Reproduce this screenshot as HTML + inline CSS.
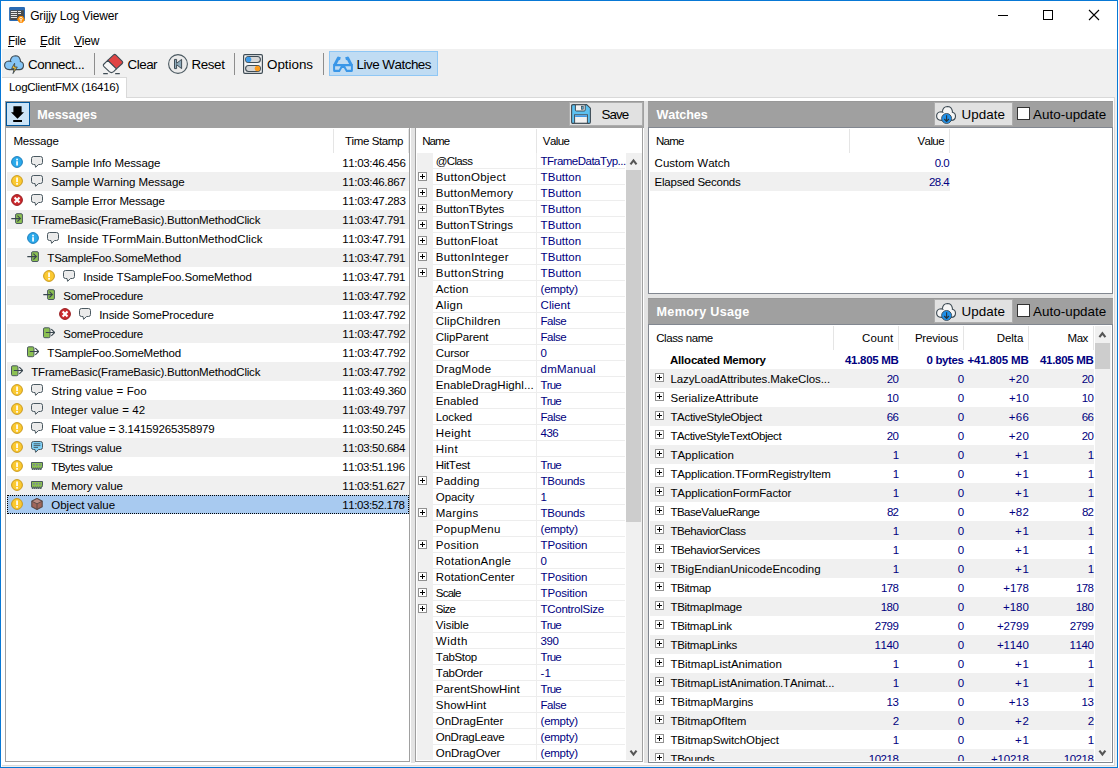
<!DOCTYPE html><html><head><meta charset="utf-8"><title>Grijjy Log Viewer</title>
<style>
*{box-sizing:border-box;margin:0;padding:0}
html,body{width:1119px;height:768px;overflow:hidden;background:#fff}
body{position:relative;font-family:"Liberation Sans",sans-serif;font-size:11.5px;color:#000;line-height:19px}
.a{position:absolute}
.ic{position:absolute;overflow:visible}
.t{position:absolute;white-space:nowrap;font-kerning:none}
.tb{font-size:13px;line-height:28px}
.hd{position:absolute;background:#a0a0a0}
.hdt{position:absolute;color:#fff;font-weight:bold;font-size:12.6px;line-height:26px;white-space:nowrap}
.list{position:absolute;border:1px solid #828790;background:#fff;overflow:hidden}
.row{position:absolute;left:1px;right:0;height:19px}
.g{background:#f0f0f0}
.nv{color:#000080}
.r{text-align:right}
.btn{position:absolute;background:#e1e1e1;border:1px solid #adadad}
.colsep{position:absolute;width:1px;background:#e5e5e5}
.irow{position:absolute;left:1px;height:16px;line-height:16px;width:208px;border-bottom:1px solid #ededed}
.irow .gut{position:absolute;left:0;top:0;width:16px;height:16px;background:#f0f0f0}
.irow .vs{position:absolute;left:119px;top:0;width:1px;height:16px;background:#ededed}
</style></head><body>

<svg width="0" height="0" style="position:absolute">
<defs>
<symbol id="i-info" viewBox="0 0 12 12"><circle cx="6" cy="6" r="5.4" fill="#2aa9ea" stroke="#1a7dbd" stroke-width="1"/><rect x="5.2" y="2.7" width="1.7" height="1.7" fill="#fff"/><rect x="5.2" y="5.2" width="1.7" height="4.3" fill="#fff"/></symbol>
<symbol id="i-warn" viewBox="0 0 12 12"><circle cx="6" cy="6" r="5.4" fill="#fbc931" stroke="#c9981a" stroke-width="1"/><rect x="5.2" y="2.5" width="1.7" height="4.6" fill="#fff"/><rect x="5.2" y="8" width="1.7" height="1.7" fill="#fff"/></symbol>
<symbol id="i-err" viewBox="0 0 12 12"><circle cx="6" cy="6" r="5.4" fill="#cc2a2e" stroke="#96191d" stroke-width="1"/><path d="M3.6 3.6L8.5 8.5M8.5 3.6L3.6 8.5" stroke="#fff" stroke-width="2.1" fill="none"/></symbol>
<symbol id="i-bub" viewBox="0 0 12 12"><path d="M2.5 0.5H9.5Q11.5 0.5 11.5 2.5V6.5Q11.5 8.5 9.5 8.5H7.6L4.6 11.3L4 8.5H2.5Q0.5 8.5 0.5 6.5V2.5Q0.5 0.5 2.5 0.5Z" fill="#ebebeb" stroke="#4a5860" stroke-width="1" stroke-linejoin="round"/></symbol>
<symbol id="i-strs" viewBox="0 0 12 12"><path d="M2.5 0.5H9.5Q11.5 0.5 11.5 2.5V6.5Q11.5 8.5 9.5 8.5H7.6L4.6 11.3L4 8.5H2.5Q0.5 8.5 0.5 6.5V2.5Q0.5 0.5 2.5 0.5Z" fill="#7fd0f6" stroke="#4a5860" stroke-width="1" stroke-linejoin="round"/><path d="M2.6 2.8H9.4M2.6 4.6H9.4M2.6 6.4H7" stroke="#44525a" stroke-width="0.9"/></symbol>
<symbol id="i-mem" viewBox="0 0 12 12"><path d="M0.5 2.5H11.5V6.2L11 8H10.2V9.5H9.2V8H8.2V9.5H7.2V8H6.2V9.5H5.2V8H4.2V9.5H3.2V8H2.2V9.5H1.2V8H0.5Z" fill="#8cc152" stroke="#4a5860" stroke-width="1" stroke-linejoin="round"/><rect x="2" y="4" width="1.8" height="1.6" fill="#7a8a94"/><rect x="5" y="4" width="1.8" height="1.6" fill="#7a8a94"/><rect x="8" y="4" width="1.8" height="1.6" fill="#7a8a94"/></symbol>
<symbol id="i-obj" viewBox="0 0 12 12"><path d="M6 0.6L11.2 3.2V8.8L6 11.4L0.8 8.8V3.2Z" fill="#a1665b" stroke="#5a4a48" stroke-width="1.1" stroke-linejoin="round"/><path d="M6 0.6L11.2 3.2L6 5.8L0.8 3.2Z" fill="#b98a80" stroke="#5a4a48" stroke-width="0.9" stroke-linejoin="round"/><path d="M6 5.8V11.4" stroke="#5a4a48" stroke-width="1"/></symbol>
<symbol id="i-enter" viewBox="0 0 12 12"><rect x="4.6" y="0.7" width="6.8" height="9.8" rx="1.3" fill="#8cc152" stroke="#4a5860" stroke-width="1"/><path d="M0.3 5.6H9M6.4 2.7L9.4 5.6L6.4 8.5" stroke="#3a474f" stroke-width="1.1" fill="none"/></symbol>
<symbol id="i-exit" viewBox="0 0 12 12"><rect x="0.5" y="0.8" width="6.5" height="9.9" rx="1.3" fill="#8cc152" stroke="#4a5860" stroke-width="1"/><path d="M2.8 5.5H11.3M8.3 2.1L11.7 5.5L8.3 8.9" stroke="#3a474f" stroke-width="1.1" fill="none"/></symbol>
<symbol id="i-plus" viewBox="0 0 9 9"><rect x="0.5" y="0.5" width="8" height="8" fill="#fff" stroke="#919191" stroke-width="1"/><path d="M2 4.5H7M4.5 2V7" stroke="#000" stroke-width="1"/></symbol>
<symbol id="i-cloud" viewBox="0 0 20 16"><path d="M5.3 14.6Q0.6 14.4 0.6 10.2Q0.7 6.4 5 6Q6.2 6 7 6.6Q6.3 6 6.3 6Q7 0.8 11.4 0.7Q15.6 0.8 16.4 5.4Q16.5 6 16.3 6.5Q19.5 7 19.5 10.6Q19.3 14.5 15.4 14.6Z" stroke-linejoin="round"/></symbol>
</defs>
</svg>

<div class="a" style="left:0;top:0;width:1118px;height:768px;border:1px solid #0878d5"></div>
<div class="a" style="left:2px;top:49px;width:1115px;height:718px;background:#f0f0f0"></div>
<div class="a" style="left:2px;top:97px;width:1113px;height:669px;background:#fff;border:1px solid #d9d9d9;border-left:none"></div>
<div class="a" style="left:2px;top:77px;width:125px;height:21px;background:#fff;border:1px solid #d9d9d9;border-bottom:none;border-left:none"></div>
<div class="t" style="top:77px;line-height:20px;letter-spacing:-0.285px;left:9.0px;">LogClientFMX (16416)</div>
<svg class="ic" style="left:9px;top:6px" width="17" height="18" viewBox="0 0 17 18">
<rect x="0.1" y="0.9" width="15.9" height="14.1" rx="1.3" fill="#2a6ab3"/>
<rect x="1.2" y="4.2" width="13.7" height="9.7" fill="#4b4b4b"/>
<path d="M1.9 5.5H8M1.9 7.5H8M1.9 9.5H8M1.9 11.5H8M9 5.5H12M9 7.5H12" stroke="#e6e6e6" stroke-width="1.1"/>
<path d="M8.6 13.4L10.3 10.5H13.7L15.4 13.4L13.7 16.3H10.3Z" fill="#ff8c00" stroke="#ff8c00" stroke-width="0.9" stroke-linejoin="round"/>
<circle cx="12" cy="12.6" r="1.25" stroke="#fff" stroke-width="0.8" fill="none"/><path d="M12 13.8V16" stroke="#fff" stroke-width="0.9"/></svg>
<div class="t" style="top:6px;line-height:20px;letter-spacing:-0.159px;font-size:12px;left:30.2px;">Grijjy Log Viewer</div>
<div class="a" style="left:998px;top:15px;width:10px;height:1px;background:#000"></div>
<div class="a" style="left:1043px;top:10px;width:10px;height:10px;border:1px solid #000"></div>
<svg class="ic" style="left:1088px;top:9px" width="12" height="12" viewBox="0 0 12 12"><path d="M1 1L11 11M11 1L1 11" stroke="#000" stroke-width="1.1"/></svg>
<div class="t" style="top:32px;line-height:19px;letter-spacing:-0.349px;font-size:12px;left:8px;">File</div>
<div class="a" style="left:8px;top:46px;width:5.9px;height:1px;background:#000"></div>
<div class="t" style="top:32px;line-height:19px;letter-spacing:-0.142px;font-size:12px;left:40px;">Edit</div>
<div class="a" style="left:40px;top:46px;width:6.1px;height:1px;background:#000"></div>
<div class="t" style="top:32px;line-height:19px;letter-spacing:-0.182px;font-size:12px;left:74px;">View</div>
<div class="a" style="left:74px;top:46px;width:7.5px;height:1px;background:#000"></div>
<svg class="ic" style="left:4px;top:54px" width="20" height="21" viewBox="0 0 20 21">
<use href="#i-cloud" y="1" width="20" height="16" fill="#86c5f6" stroke="#3f4c55" stroke-width="1.1"/>
<path d="M10.6 9.2L7.6 14.6H10.2L9 19.6L13.3 13H10.7Z" fill="#fbc531" stroke="#3f4c55" stroke-width="0.9" stroke-linejoin="round"/></svg>
<div class="t" style="top:51px;line-height:28px;letter-spacing:-0.478px;font-size:13.4px;left:28px;">Connect...</div>
<div class="a" style="left:94px;top:53px;width:1px;height:22px;background:#8d8d8d"></div>
<svg class="ic" style="left:102px;top:53px" width="22" height="22" viewBox="0 0 22 22">
<path d="M11.6 1.9Q12.7 0.9 13.8 1.9L20.3 8.3Q21.3 9.4 20.3 10.5L14.4 15.9L5.7 7.4Z" fill="#e04444" stroke="#3f4c55" stroke-width="1.1" stroke-linejoin="round"/>
<path d="M5.7 7.4L14.4 15.9L11.6 18.7Q9.4 20.6 7.3 18.7L2 13.6Q0.6 12.4 2 11Z" fill="#f6f6f6" stroke="#3f4c55" stroke-width="1.1" stroke-linejoin="round"/>
<path d="M1.2 20.6H5.8M13.2 20.6H17.8" stroke="#3f4c55" stroke-width="1.1"/></svg>
<div class="t" style="top:51px;line-height:28px;letter-spacing:-0.484px;font-size:13.4px;left:127.5px;">Clear</div>
<svg class="ic" style="left:168px;top:54px" width="20" height="20" viewBox="0 0 20 20">
<circle cx="10" cy="10" r="9.4" fill="#ebebeb" stroke="#4a5860" stroke-width="1.1"/>
<path d="M6.5 5.4H8.6V9.3L13.6 5.4V14.6L8.6 10.7V14.6H6.5Z" fill="#8eaaba" stroke="#3f4c55" stroke-width="1" stroke-linejoin="round"/></svg>
<div class="t" style="top:51px;line-height:28px;letter-spacing:-0.401px;font-size:13.4px;left:191.5px;">Reset</div>
<div class="a" style="left:234px;top:53px;width:1px;height:22px;background:#8d8d8d"></div>
<svg class="ic" style="left:243px;top:54px" width="20" height="20" viewBox="0 0 20 20">
<rect x="0.6" y="0.6" width="18.8" height="18.8" rx="1.3" fill="#f4f4f4" stroke="#3f4c55" stroke-width="1.2"/>
<rect x="2.6" y="2.5" width="14.8" height="6" rx="3" fill="#d6d6d6" stroke="#3f4c55" stroke-width="1.1"/>
<rect x="2.6" y="11.5" width="14.8" height="6" rx="3" fill="#d6d6d6" stroke="#3f4c55" stroke-width="1.1"/>
<circle cx="5.6" cy="5.5" r="2.7" fill="#3d9be9"/><circle cx="14.4" cy="14.5" r="2.7" fill="#fb9a1b"/></svg>
<div class="t" style="top:51px;line-height:28px;letter-spacing:-0.026px;font-size:13.4px;left:267px;">Options</div>
<div class="a" style="left:323px;top:53px;width:1px;height:22px;background:#8d8d8d"></div>
<div class="a" style="left:329px;top:51px;width:109px;height:25px;background:#c0dcf3;border:1px solid #8fc7f5"></div>
<svg class="ic" style="left:333px;top:56px" width="20" height="17" viewBox="0 0 20 17">
<path fill-rule="evenodd" fill="#3a97e8" d="M0.1 7.9H19.9V14.5Q19.9 16 18.4 16H13.2L10.9 12H9.1L6.8 16H1.6Q0.1 16 0.1 14.5ZM2.1 10.2V13.8H5.9L7.8 10.2ZM12.2 10.2L14.1 13.8H17.9V10.2Z"/>
<path d="M1.9 8.6L5.3 2.1L7.4 2.7M18.1 8.6L14.7 2.1L12.6 2.7" stroke="#3a97e8" stroke-width="3" fill="none" stroke-linejoin="round"/></svg>
<div class="t" style="top:51px;line-height:28px;letter-spacing:-0.486px;font-size:13.4px;left:356.5px;">Live Watches</div>
<div class="a" style="left:410px;top:126px;width:5px;height:637px;background:#e3e3e3;border-left:1px solid #fff"></div>
<div class="a" style="left:644px;top:101px;width:4px;height:662px;background:#e3e3e3"></div>
<div class="a" style="left:648px;top:294px;width:465px;height:4px;background:#e3e3e3"></div>
<div class="hd" style="left:5px;top:101px;width:639px;height:27px;border-top:1px solid #989898"></div>
<div class="a" style="left:6px;top:102px;width:24px;height:24px;background:#cce4f7;border:1px solid #005499"></div>
<svg class="ic" style="left:6px;top:102px" width="24" height="24" viewBox="0 0 24 24"><path d="M7.4 4.2H15.6V10.3H18L11.5 16.8L5 10.3H7.4Z" fill="#000"/><rect x="7.2" y="18" width="8.8" height="2" fill="#000"/></svg>
<div class="t" style="top:102px;line-height:26px;letter-spacing:-0.080px;font-size:12.6px;font-weight:bold;left:37.3px;color:#fff">Messages</div>
<div class="btn" style="left:569px;top:102px;width:74px;height:24px"></div>
<svg class="ic" style="left:571px;top:104px" width="20" height="20" viewBox="0 0 20 20">
<path d="M2 0.6H15.6L19.4 4.2V18Q19.4 19.4 18 19.4H2Q0.6 19.4 0.6 18V2Q0.6 0.6 2 0.6Z" fill="#5cc1f1" stroke="#3f4c55" stroke-width="1.1"/>
<path d="M4.4 0.8H14.2V6Q14.2 7 13.2 7H5.4Q4.4 7 4.4 6Z" fill="#f1f1f1" stroke="#3f4c55" stroke-width="1"/>
<rect x="10.4" y="2.3" width="1.8" height="2.9" fill="#5cc1f1" stroke="#3f4c55" stroke-width="0.8"/>
<rect x="3.6" y="10.8" width="12.8" height="8.4" fill="#f1f1f1" stroke="#3f4c55" stroke-width="1"/>
<rect x="4.1" y="11.3" width="11.8" height="1.7" fill="#3d9be9"/></svg>
<div class="t" style="top:102px;line-height:26px;letter-spacing:-0.936px;font-size:13.4px;left:601.5px;">Save</div>
<div class="list" style="left:5px;top:127px;width:405px;height:635px;border-color:#a0a0a0">
<div class="t" style="top:1px;line-height:25px;letter-spacing:-0.209px;left:7.4px;">Message</div>
<div class="colsep" style="left:327px;top:1px;height:24px"></div>
<div class="t" style="top:1px;line-height:25px;letter-spacing:-0.379px;left:338.9px;">Time Stamp</div>
<div class="colsep" style="left:402px;top:1px;height:24px"></div>
<div class="row" style="top:25px">
<svg class="ic" style="left:4px;top:3px" width="12" height="12" ><use href="#i-info"/></svg>
<svg class="ic" style="left:24px;top:3px" width="12" height="12" ><use href="#i-bub"/></svg>
<div class="t" style="top:1px;line-height:19px;letter-spacing:-0.116px;left:44.3px;">Sample Info Message</div>
<div class="t" style="top:1px;line-height:19px;letter-spacing:-0.319px;left:335.2px;">11:03:46.456</div>
</div>
<div class="row g" style="top:44px">
<svg class="ic" style="left:4px;top:3px" width="12" height="12" ><use href="#i-warn"/></svg>
<svg class="ic" style="left:24px;top:3px" width="12" height="12" ><use href="#i-bub"/></svg>
<div class="t" style="top:1px;line-height:19px;letter-spacing:-0.073px;left:44.3px;">Sample Warning Message</div>
<div class="t" style="top:1px;line-height:19px;letter-spacing:-0.325px;left:335.2px;">11:03:46.867</div>
</div>
<div class="row" style="top:63px">
<svg class="ic" style="left:4px;top:3px" width="12" height="12" ><use href="#i-err"/></svg>
<svg class="ic" style="left:24px;top:3px" width="12" height="12" ><use href="#i-bub"/></svg>
<div class="t" style="top:1px;line-height:19px;letter-spacing:-0.214px;left:44.3px;">Sample Error Message</div>
<div class="t" style="top:1px;line-height:19px;letter-spacing:-0.321px;left:335.2px;">11:03:47.283</div>
</div>
<div class="row g" style="top:82px">
<svg class="ic" style="left:4px;top:3px" width="12" height="12" ><use href="#i-enter"/></svg>
<div class="t" style="top:1px;line-height:19px;letter-spacing:-0.200px;left:24.3px;">TFrameBasic(FrameBasic).ButtonMethodClick</div>
<div class="t" style="top:1px;line-height:19px;letter-spacing:-0.357px;left:335.2px;">11:03:47.791</div>
</div>
<div class="row" style="top:101px">
<svg class="ic" style="left:20px;top:3px" width="12" height="12" ><use href="#i-info"/></svg>
<svg class="ic" style="left:40px;top:3px" width="12" height="12" ><use href="#i-bub"/></svg>
<div class="t" style="top:1px;line-height:19px;letter-spacing:0.087px;left:60.3px;">Inside TFormMain.ButtonMethodClick</div>
<div class="t" style="top:1px;line-height:19px;letter-spacing:-0.357px;left:335.2px;">11:03:47.791</div>
</div>
<div class="row g" style="top:120px">
<svg class="ic" style="left:20px;top:3px" width="12" height="12" ><use href="#i-enter"/></svg>
<div class="t" style="top:1px;line-height:19px;letter-spacing:-0.184px;left:40.3px;">TSampleFoo.SomeMethod</div>
<div class="t" style="top:1px;line-height:19px;letter-spacing:-0.357px;left:335.2px;">11:03:47.791</div>
</div>
<div class="row" style="top:139px">
<svg class="ic" style="left:36px;top:3px" width="12" height="12" ><use href="#i-warn"/></svg>
<svg class="ic" style="left:56px;top:3px" width="12" height="12" ><use href="#i-bub"/></svg>
<div class="t" style="top:1px;line-height:19px;letter-spacing:-0.101px;left:76.3px;">Inside TSampleFoo.SomeMethod</div>
<div class="t" style="top:1px;line-height:19px;letter-spacing:-0.357px;left:335.2px;">11:03:47.791</div>
</div>
<div class="row g" style="top:158px">
<svg class="ic" style="left:36px;top:3px" width="12" height="12" ><use href="#i-enter"/></svg>
<div class="t" style="top:1px;line-height:19px;letter-spacing:-0.264px;left:56.3px;">SomeProcedure</div>
<div class="t" style="top:1px;line-height:19px;letter-spacing:-0.338px;left:335.2px;">11:03:47.792</div>
</div>
<div class="row" style="top:177px">
<svg class="ic" style="left:52px;top:3px" width="12" height="12" ><use href="#i-err"/></svg>
<svg class="ic" style="left:72px;top:3px" width="12" height="12" ><use href="#i-bub"/></svg>
<div class="t" style="top:1px;line-height:19px;letter-spacing:-0.131px;left:92.3px;">Inside SomeProcedure</div>
<div class="t" style="top:1px;line-height:19px;letter-spacing:-0.338px;left:335.2px;">11:03:47.792</div>
</div>
<div class="row g" style="top:196px">
<svg class="ic" style="left:36px;top:3px" width="12" height="12" ><use href="#i-exit"/></svg>
<div class="t" style="top:1px;line-height:19px;letter-spacing:-0.264px;left:56.3px;">SomeProcedure</div>
<div class="t" style="top:1px;line-height:19px;letter-spacing:-0.338px;left:335.2px;">11:03:47.792</div>
</div>
<div class="row" style="top:215px">
<svg class="ic" style="left:20px;top:3px" width="12" height="12" ><use href="#i-exit"/></svg>
<div class="t" style="top:1px;line-height:19px;letter-spacing:-0.184px;left:40.3px;">TSampleFoo.SomeMethod</div>
<div class="t" style="top:1px;line-height:19px;letter-spacing:-0.338px;left:335.2px;">11:03:47.792</div>
</div>
<div class="row g" style="top:234px">
<svg class="ic" style="left:4px;top:3px" width="12" height="12" ><use href="#i-exit"/></svg>
<div class="t" style="top:1px;line-height:19px;letter-spacing:-0.200px;left:24.3px;">TFrameBasic(FrameBasic).ButtonMethodClick</div>
<div class="t" style="top:1px;line-height:19px;letter-spacing:-0.338px;left:335.2px;">11:03:47.792</div>
</div>
<div class="row" style="top:253px">
<svg class="ic" style="left:4px;top:3px" width="12" height="12" ><use href="#i-warn"/></svg>
<svg class="ic" style="left:24px;top:3px" width="12" height="12" ><use href="#i-bub"/></svg>
<div class="t" style="top:1px;line-height:19px;letter-spacing:0.107px;left:44.3px;">String value = Foo</div>
<div class="t" style="top:1px;line-height:19px;letter-spacing:-0.280px;left:335.2px;">11:03:49.360</div>
</div>
<div class="row g" style="top:272px">
<svg class="ic" style="left:4px;top:3px" width="12" height="12" ><use href="#i-warn"/></svg>
<svg class="ic" style="left:24px;top:3px" width="12" height="12" ><use href="#i-bub"/></svg>
<div class="t" style="top:1px;line-height:19px;letter-spacing:0.082px;left:44.3px;">Integer value = 42</div>
<div class="t" style="top:1px;line-height:19px;letter-spacing:-0.337px;left:335.2px;">11:03:49.797</div>
</div>
<div class="row" style="top:291px">
<svg class="ic" style="left:4px;top:3px" width="12" height="12" ><use href="#i-warn"/></svg>
<svg class="ic" style="left:24px;top:3px" width="12" height="12" ><use href="#i-bub"/></svg>
<div class="t" style="top:1px;line-height:19px;letter-spacing:-0.175px;left:44.3px;">Float value = 3.14159265358979</div>
<div class="t" style="top:1px;line-height:19px;letter-spacing:-0.355px;left:335.2px;">11:03:50.245</div>
</div>
<div class="row g" style="top:310px">
<svg class="ic" style="left:4px;top:3px" width="12" height="12" ><use href="#i-warn"/></svg>
<svg class="ic" style="left:24px;top:3px" width="12" height="12" ><use href="#i-strs"/></svg>
<div class="t" style="top:1px;line-height:19px;letter-spacing:-0.233px;left:44.3px;">TStrings value</div>
<div class="t" style="top:1px;line-height:19px;letter-spacing:-0.348px;left:335.2px;">11:03:50.684</div>
</div>
<div class="row" style="top:329px">
<svg class="ic" style="left:4px;top:3px" width="12" height="12" ><use href="#i-warn"/></svg>
<svg class="ic" style="left:24px;top:3px" width="12" height="12" ><use href="#i-mem"/></svg>
<div class="t" style="top:1px;line-height:19px;letter-spacing:-0.435px;left:44.3px;">TBytes value</div>
<div class="t" style="top:1px;line-height:19px;letter-spacing:-0.392px;left:335.2px;">11:03:51.196</div>
</div>
<div class="row g" style="top:348px">
<svg class="ic" style="left:4px;top:3px" width="12" height="12" ><use href="#i-warn"/></svg>
<svg class="ic" style="left:24px;top:3px" width="12" height="12" ><use href="#i-mem"/></svg>
<div class="t" style="top:1px;line-height:19px;letter-spacing:-0.057px;left:44.3px;">Memory value</div>
<div class="t" style="top:1px;line-height:19px;letter-spacing:-0.379px;left:335.2px;">11:03:51.627</div>
</div>
<div class="row" style="top:367px;background:#a8caf0;outline:1px dotted #000;outline-offset:-1px">
<svg class="ic" style="left:4px;top:3px" width="12" height="12" ><use href="#i-warn"/></svg>
<svg class="ic" style="left:24px;top:3px" width="12" height="12" ><use href="#i-obj"/></svg>
<div class="t" style="top:1px;line-height:19px;letter-spacing:-0.015px;left:44.3px;">Object value</div>
<div class="t" style="top:1px;line-height:19px;letter-spacing:-0.403px;left:335.2px;">11:03:52.178</div>
</div>
</div>
<div class="list" style="left:415px;top:127px;width:228px;height:635px;border-color:#a0a0a0">
<div class="t" style="top:1px;line-height:25px;letter-spacing:-0.919px;left:6.2px;">Name</div>
<div class="colsep" style="left:120px;top:1px;height:24px"></div>
<div class="t" style="top:1px;line-height:25px;letter-spacing:-0.583px;left:126.8px;">Value</div>
<div class="irow" style="top:25px"><div class="gut"></div><div class="vs"></div>
<div class="t" style="top:0px;line-height:16px;letter-spacing:-0.662px;left:18.8px;">@Class</div>
<div class="t nv" style="top:0px;line-height:16px;letter-spacing:-0.519px;left:123.6px;">TFrameDataTyp...</div>
</div>
<div class="irow" style="top:41px"><div class="gut"></div><div class="vs"></div>
<svg class="ic" style="left:1px;top:3px" width="9" height="9" ><use href="#i-plus"/></svg>
<div class="t" style="top:0px;line-height:16px;letter-spacing:0.310px;left:18.8px;">ButtonObject</div>
<div class="t nv" style="top:0px;line-height:16px;letter-spacing:0.060px;left:123.6px;">TButton</div>
</div>
<div class="irow" style="top:57px"><div class="gut"></div><div class="vs"></div>
<svg class="ic" style="left:1px;top:3px" width="9" height="9" ><use href="#i-plus"/></svg>
<div class="t" style="top:0px;line-height:16px;letter-spacing:0.226px;left:18.8px;">ButtonMemory</div>
<div class="t nv" style="top:0px;line-height:16px;letter-spacing:0.060px;left:123.6px;">TButton</div>
</div>
<div class="irow" style="top:73px"><div class="gut"></div><div class="vs"></div>
<svg class="ic" style="left:1px;top:3px" width="9" height="9" ><use href="#i-plus"/></svg>
<div class="t" style="top:0px;line-height:16px;letter-spacing:-0.054px;left:18.8px;">ButtonTBytes</div>
<div class="t nv" style="top:0px;line-height:16px;letter-spacing:0.060px;left:123.6px;">TButton</div>
</div>
<div class="irow" style="top:89px"><div class="gut"></div><div class="vs"></div>
<svg class="ic" style="left:1px;top:3px" width="9" height="9" ><use href="#i-plus"/></svg>
<div class="t" style="top:0px;line-height:16px;letter-spacing:0.089px;left:18.8px;">ButtonTStrings</div>
<div class="t nv" style="top:0px;line-height:16px;letter-spacing:0.060px;left:123.6px;">TButton</div>
</div>
<div class="irow" style="top:105px"><div class="gut"></div><div class="vs"></div>
<svg class="ic" style="left:1px;top:3px" width="9" height="9" ><use href="#i-plus"/></svg>
<div class="t" style="top:0px;line-height:16px;letter-spacing:0.305px;left:18.8px;">ButtonFloat</div>
<div class="t nv" style="top:0px;line-height:16px;letter-spacing:0.060px;left:123.6px;">TButton</div>
</div>
<div class="irow" style="top:121px"><div class="gut"></div><div class="vs"></div>
<svg class="ic" style="left:1px;top:3px" width="9" height="9" ><use href="#i-plus"/></svg>
<div class="t" style="top:0px;line-height:16px;letter-spacing:0.311px;left:18.8px;">ButtonInteger</div>
<div class="t nv" style="top:0px;line-height:16px;letter-spacing:0.060px;left:123.6px;">TButton</div>
</div>
<div class="irow" style="top:137px"><div class="gut"></div><div class="vs"></div>
<svg class="ic" style="left:1px;top:3px" width="9" height="9" ><use href="#i-plus"/></svg>
<div class="t" style="top:0px;line-height:16px;letter-spacing:0.417px;left:18.8px;">ButtonString</div>
<div class="t nv" style="top:0px;line-height:16px;letter-spacing:0.060px;left:123.6px;">TButton</div>
</div>
<div class="irow" style="top:153px"><div class="gut"></div><div class="vs"></div>
<div class="t" style="top:0px;line-height:16px;letter-spacing:0.111px;left:18.8px;">Action</div>
<div class="t nv" style="top:0px;line-height:16px;letter-spacing:-0.269px;left:123.6px;">(empty)</div>
</div>
<div class="irow" style="top:169px"><div class="gut"></div><div class="vs"></div>
<div class="t" style="top:0px;line-height:16px;letter-spacing:0.307px;left:18.8px;">Align</div>
<div class="t nv" style="top:0px;line-height:16px;letter-spacing:0.035px;left:123.6px;">Client</div>
</div>
<div class="irow" style="top:185px"><div class="gut"></div><div class="vs"></div>
<div class="t" style="top:0px;line-height:16px;letter-spacing:0.185px;left:18.8px;">ClipChildren</div>
<div class="t nv" style="top:0px;line-height:16px;letter-spacing:-0.502px;left:123.6px;">False</div>
</div>
<div class="irow" style="top:201px"><div class="gut"></div><div class="vs"></div>
<div class="t" style="top:0px;line-height:16px;letter-spacing:-0.106px;left:18.8px;">ClipParent</div>
<div class="t nv" style="top:0px;line-height:16px;letter-spacing:-0.502px;left:123.6px;">False</div>
</div>
<div class="irow" style="top:217px"><div class="gut"></div><div class="vs"></div>
<div class="t" style="top:0px;line-height:16px;letter-spacing:-0.182px;left:18.8px;">Cursor</div>
<div class="t nv" style="top:0px;line-height:16px;letter-spacing:-0.399px;left:123.6px;">0</div>
</div>
<div class="irow" style="top:233px"><div class="gut"></div><div class="vs"></div>
<div class="t" style="top:0px;line-height:16px;letter-spacing:0.224px;left:18.8px;">DragMode</div>
<div class="t nv" style="top:0px;line-height:16px;letter-spacing:0.174px;left:123.6px;">dmManual</div>
</div>
<div class="irow" style="top:249px"><div class="gut"></div><div class="vs"></div>
<div class="t" style="top:0px;line-height:16px;letter-spacing:0.077px;left:18.8px;">EnableDragHighl...</div>
<div class="t nv" style="top:0px;line-height:16px;letter-spacing:-0.871px;left:123.6px;">True</div>
</div>
<div class="irow" style="top:265px"><div class="gut"></div><div class="vs"></div>
<div class="t" style="top:0px;line-height:16px;letter-spacing:0.049px;left:18.8px;">Enabled</div>
<div class="t nv" style="top:0px;line-height:16px;letter-spacing:-0.871px;left:123.6px;">True</div>
</div>
<div class="irow" style="top:281px"><div class="gut"></div><div class="vs"></div>
<div class="t" style="top:0px;line-height:16px;letter-spacing:-0.132px;left:18.8px;">Locked</div>
<div class="t nv" style="top:0px;line-height:16px;letter-spacing:-0.502px;left:123.6px;">False</div>
</div>
<div class="irow" style="top:297px"><div class="gut"></div><div class="vs"></div>
<div class="t" style="top:0px;line-height:16px;letter-spacing:0.352px;left:18.8px;">Height</div>
<div class="t nv" style="top:0px;line-height:16px;letter-spacing:-0.519px;left:123.6px;">436</div>
</div>
<div class="irow" style="top:313px"><div class="gut"></div><div class="vs"></div>
<div class="t" style="top:0px;line-height:16px;letter-spacing:0.445px;left:18.8px;">Hint</div>

</div>
<div class="irow" style="top:329px"><div class="gut"></div><div class="vs"></div>
<div class="t" style="top:0px;line-height:16px;letter-spacing:-0.335px;left:18.8px;">HitTest</div>
<div class="t nv" style="top:0px;line-height:16px;letter-spacing:-0.871px;left:123.6px;">True</div>
</div>
<div class="irow" style="top:345px"><div class="gut"></div><div class="vs"></div>
<svg class="ic" style="left:1px;top:3px" width="9" height="9" ><use href="#i-plus"/></svg>
<div class="t" style="top:0px;line-height:16px;letter-spacing:0.248px;left:18.8px;">Padding</div>
<div class="t nv" style="top:0px;line-height:16px;letter-spacing:-0.279px;left:123.6px;">TBounds</div>
</div>
<div class="irow" style="top:361px"><div class="gut"></div><div class="vs"></div>
<div class="t" style="top:0px;line-height:16px;letter-spacing:-0.105px;left:18.8px;">Opacity</div>
<div class="t nv" style="top:0px;line-height:16px;letter-spacing:-0.399px;left:123.6px;">1</div>
</div>
<div class="irow" style="top:377px"><div class="gut"></div><div class="vs"></div>
<svg class="ic" style="left:1px;top:3px" width="9" height="9" ><use href="#i-plus"/></svg>
<div class="t" style="top:0px;line-height:16px;letter-spacing:0.239px;left:18.8px;">Margins</div>
<div class="t nv" style="top:0px;line-height:16px;letter-spacing:-0.279px;left:123.6px;">TBounds</div>
</div>
<div class="irow" style="top:393px"><div class="gut"></div><div class="vs"></div>
<div class="t" style="top:0px;line-height:16px;letter-spacing:0.324px;left:18.8px;">PopupMenu</div>
<div class="t nv" style="top:0px;line-height:16px;letter-spacing:-0.269px;left:123.6px;">(empty)</div>
</div>
<div class="irow" style="top:409px"><div class="gut"></div><div class="vs"></div>
<svg class="ic" style="left:1px;top:3px" width="9" height="9" ><use href="#i-plus"/></svg>
<div class="t" style="top:0px;line-height:16px;letter-spacing:0.264px;left:18.8px;">Position</div>
<div class="t nv" style="top:0px;line-height:16px;letter-spacing:-0.148px;left:123.6px;">TPosition</div>
</div>
<div class="irow" style="top:425px"><div class="gut"></div><div class="vs"></div>
<div class="t" style="top:0px;line-height:16px;letter-spacing:0.244px;left:18.8px;">RotationAngle</div>
<div class="t nv" style="top:0px;line-height:16px;letter-spacing:-0.399px;left:123.6px;">0</div>
</div>
<div class="irow" style="top:441px"><div class="gut"></div><div class="vs"></div>
<svg class="ic" style="left:1px;top:3px" width="9" height="9" ><use href="#i-plus"/></svg>
<div class="t" style="top:0px;line-height:16px;letter-spacing:0.105px;left:18.8px;">RotationCenter</div>
<div class="t nv" style="top:0px;line-height:16px;letter-spacing:-0.148px;left:123.6px;">TPosition</div>
</div>
<div class="irow" style="top:457px"><div class="gut"></div><div class="vs"></div>
<svg class="ic" style="left:1px;top:3px" width="9" height="9" ><use href="#i-plus"/></svg>
<div class="t" style="top:0px;line-height:16px;letter-spacing:-0.772px;left:18.8px;">Scale</div>
<div class="t nv" style="top:0px;line-height:16px;letter-spacing:-0.148px;left:123.6px;">TPosition</div>
</div>
<div class="irow" style="top:473px"><div class="gut"></div><div class="vs"></div>
<svg class="ic" style="left:1px;top:3px" width="9" height="9" ><use href="#i-plus"/></svg>
<div class="t" style="top:0px;line-height:16px;letter-spacing:-0.791px;left:18.8px;">Size</div>
<div class="t nv" style="top:0px;line-height:16px;letter-spacing:-0.276px;left:123.6px;">TControlSize</div>
</div>
<div class="irow" style="top:489px"><div class="gut"></div><div class="vs"></div>
<div class="t" style="top:0px;line-height:16px;letter-spacing:-0.132px;left:18.8px;">Visible</div>
<div class="t nv" style="top:0px;line-height:16px;letter-spacing:-0.871px;left:123.6px;">True</div>
</div>
<div class="irow" style="top:505px"><div class="gut"></div><div class="vs"></div>
<div class="t" style="top:0px;line-height:16px;letter-spacing:0.555px;left:18.8px;">Width</div>
<div class="t nv" style="top:0px;line-height:16px;letter-spacing:-0.476px;left:123.6px;">390</div>
</div>
<div class="irow" style="top:521px"><div class="gut"></div><div class="vs"></div>
<div class="t" style="top:0px;line-height:16px;letter-spacing:-0.365px;left:18.8px;">TabStop</div>
<div class="t nv" style="top:0px;line-height:16px;letter-spacing:-0.871px;left:123.6px;">True</div>
</div>
<div class="irow" style="top:537px"><div class="gut"></div><div class="vs"></div>
<div class="t" style="top:0px;line-height:16px;letter-spacing:-0.324px;left:18.8px;">TabOrder</div>
<div class="t nv" style="top:0px;line-height:16px;letter-spacing:0.113px;left:123.6px;">-1</div>
</div>
<div class="irow" style="top:553px"><div class="gut"></div><div class="vs"></div>
<div class="t" style="top:0px;line-height:16px;letter-spacing:0.063px;left:18.8px;">ParentShowHint</div>
<div class="t nv" style="top:0px;line-height:16px;letter-spacing:-0.871px;left:123.6px;">True</div>
</div>
<div class="irow" style="top:569px"><div class="gut"></div><div class="vs"></div>
<div class="t" style="top:0px;line-height:16px;letter-spacing:0.186px;left:18.8px;">ShowHint</div>
<div class="t nv" style="top:0px;line-height:16px;letter-spacing:-0.502px;left:123.6px;">False</div>
</div>
<div class="irow" style="top:585px"><div class="gut"></div><div class="vs"></div>
<div class="t" style="top:0px;line-height:16px;letter-spacing:-0.028px;left:18.8px;">OnDragEnter</div>
<div class="t nv" style="top:0px;line-height:16px;letter-spacing:-0.269px;left:123.6px;">(empty)</div>
</div>
<div class="irow" style="top:601px"><div class="gut"></div><div class="vs"></div>
<div class="t" style="top:0px;line-height:16px;letter-spacing:-0.269px;left:18.8px;">OnDragLeave</div>
<div class="t nv" style="top:0px;line-height:16px;letter-spacing:-0.269px;left:123.6px;">(empty)</div>
</div>
<div class="irow" style="top:617px"><div class="gut"></div><div class="vs"></div>
<div class="t" style="top:0px;line-height:16px;letter-spacing:-0.062px;left:18.8px;">OnDragOver</div>
<div class="t nv" style="top:0px;line-height:16px;letter-spacing:-0.269px;left:123.6px;">(empty)</div>
</div>
<div class="a" style="left:0;top:632px;width:226px;height:1px;background:#fff"></div>
<div class="a" style="left:210px;top:25px;width:16px;height:607px;background:#f0f0f0"></div>
<div class="a" style="left:210px;top:42px;width:15px;height:352px;background:#cdcdcd"></div>
<svg class="ic" style="left:213px;top:30px" width="9" height="8" viewBox="0 0 9 8"><path d="M1.5 6.3L4.5 2.4L7.5 6.3" stroke="#555" stroke-width="2.1" fill="none"/></svg>
<svg class="ic" style="left:213px;top:621px" width="9" height="8" viewBox="0 0 9 8"><path d="M1.5 1.7L4.5 5.6L7.5 1.7" stroke="#555" stroke-width="2.1" fill="none"/></svg>
</div>
<div class="hd" style="left:648px;top:101px;width:465px;height:27px;border-top:1px solid #989898"></div>
<div class="t" style="top:102px;line-height:26px;letter-spacing:-0.116px;font-size:12.6px;font-weight:bold;left:656.6px;color:#fff">Watches</div>
<div class="btn" style="left:934px;top:102px;width:79px;height:24px"></div>
<svg class="ic" style="left:936px;top:105px" width="20" height="20" viewBox="0 0 20 20">
<use href="#i-cloud" y="0.8" width="20" height="16" fill="#f6f6f6" stroke="#3f4c55" stroke-width="1.1"/>
<circle cx="10.6" cy="13.5" r="5" fill="#1f8fe8" stroke="#3f4c55" stroke-width="0.9"/>
<path d="M10.6 10.2V16.2M8.3 14L10.6 16.4L12.9 14" stroke="#27333b" stroke-width="1.1" fill="none"/></svg>
<div class="t" style="top:102px;line-height:26px;letter-spacing:0.032px;font-size:13.4px;left:961.5px;">Update</div>
<div class="a" style="left:1017px;top:107px;width:13px;height:13px;background:#fff;border:1px solid #333"></div>
<div class="t" style="top:102px;line-height:26px;letter-spacing:0.029px;font-size:13.4px;left:1033px;">Auto-update</div>
<div class="list" style="left:648px;top:127px;width:465px;height:167px">
<div class="t" style="top:1px;line-height:25px;letter-spacing:-0.769px;left:7.0px;">Name</div>
<div class="colsep" style="left:200px;top:1px;height:24px"></div>
<div class="t" style="top:1px;line-height:25px;letter-spacing:-0.583px;left:268.50px;">Value</div>
<div class="colsep" style="left:300px;top:1px;height:24px"></div>
<div class="row" style="top:25px;width:300px;right:auto">
<div class="t" style="top:1px;line-height:19px;letter-spacing:-0.006px;left:4.6px;">Custom Watch</div>
<div class="t nv" style="top:1px;line-height:19px;letter-spacing:-0.484px;left:284.68px;">0.0</div>
</div>
<div class="row g" style="top:44px;width:300px;right:auto">
<div class="t" style="top:1px;line-height:19px;letter-spacing:-0.242px;left:4.6px;">Elapsed Seconds</div>
<div class="t nv" style="top:1px;line-height:19px;letter-spacing:-0.554px;left:278.98px;">28.4</div>
</div>
</div>
<div class="hd" style="left:648px;top:298px;width:465px;height:27px;border-top:1px solid #989898"></div>
<div class="t" style="top:299px;line-height:26px;letter-spacing:0.281px;font-size:12.6px;font-weight:bold;left:656.6px;color:#fff">Memory Usage</div>
<div class="btn" style="left:934px;top:299px;width:79px;height:24px"></div>
<svg class="ic" style="left:936px;top:302px" width="20" height="20" viewBox="0 0 20 20">
<use href="#i-cloud" y="0.8" width="20" height="16" fill="#f6f6f6" stroke="#3f4c55" stroke-width="1.1"/>
<circle cx="10.6" cy="13.5" r="5" fill="#1f8fe8" stroke="#3f4c55" stroke-width="0.9"/>
<path d="M10.6 10.2V16.2M8.3 14L10.6 16.4L12.9 14" stroke="#27333b" stroke-width="1.1" fill="none"/></svg>
<div class="t" style="top:299px;line-height:26px;letter-spacing:0.032px;font-size:13.4px;left:961.5px;">Update</div>
<div class="a" style="left:1017px;top:304px;width:13px;height:13px;background:#fff;border:1px solid #333"></div>
<div class="t" style="top:299px;line-height:26px;letter-spacing:0.029px;font-size:13.4px;left:1033px;">Auto-update</div>
<div class="list" style="left:648px;top:324px;width:465px;height:439px">
<div class="t" style="top:1px;line-height:25px;letter-spacing:-0.407px;left:7.2px;">Class name</div>
<div class="colsep" style="left:184px;top:1px;height:24px"></div>
<div class="t" style="top:1px;line-height:25px;letter-spacing:0.174px;left:212.92px;">Count</div>
<div class="colsep" style="left:249px;top:1px;height:24px"></div>
<div class="t" style="top:1px;line-height:25px;letter-spacing:-0.191px;left:265.90px;">Previous</div>
<div class="colsep" style="left:314px;top:1px;height:24px"></div>
<div class="t" style="top:1px;line-height:25px;letter-spacing:-0.097px;left:347.84px;">Delta</div>
<div class="colsep" style="left:379px;top:1px;height:24px"></div>
<div class="t" style="top:1px;line-height:25px;letter-spacing:-0.518px;left:418.61px;">Max</div>
<div class="colsep" style="left:444px;top:1px;height:24px"></div>
<div class="row" style="top:25px;width:444px;right:auto;font-weight:bold">
<div class="t" style="top:1px;line-height:19px;letter-spacing:-0.203px;font-weight:bold;left:20.0px;">Allocated Memory</div>
<div class="t nv" style="top:1px;line-height:19px;letter-spacing:-0.295px;font-weight:bold;left:195.00px;">41.805 MB</div>
<div class="t nv" style="top:1px;line-height:19px;letter-spacing:-0.376px;font-weight:bold;left:276.60px;">0 bytes</div>
<div class="t nv" style="top:1px;line-height:19px;letter-spacing:-0.177px;font-weight:bold;left:317.40px;">+41.805 MB</div>
<div class="t nv" style="top:1px;line-height:19px;letter-spacing:-0.295px;font-weight:bold;left:390.00px;">41.805 MB</div>
</div>
<div class="row g" style="top:44px;width:444px;right:auto">
<svg class="ic" style="left:5px;top:4px" width="9" height="9" ><use href="#i-plus"/></svg>
<div class="t" style="top:1px;line-height:19px;letter-spacing:-0.090px;left:20.4px;">LazyLoadAttributes.MakeClos...</div>
<div class="t nv" style="top:1px;line-height:19px;letter-spacing:-0.736px;left:236.74px;">20</div>
<div class="t nv" style="top:1px;line-height:19px;letter-spacing:-0.399px;left:307.80px;">0</div>
<div class="t nv" style="top:1px;line-height:19px;letter-spacing:0.255px;left:358.78px;">+20</div>
<div class="t nv" style="top:1px;line-height:19px;letter-spacing:-0.736px;left:431.74px;">20</div>
</div>
<div class="row" style="top:63px;width:444px;right:auto">
<svg class="ic" style="left:5px;top:4px" width="9" height="9" ><use href="#i-plus"/></svg>
<div class="t" style="top:1px;line-height:19px;letter-spacing:0.064px;left:20.4px;">SerializeAttribute</div>
<div class="t nv" style="top:1px;line-height:19px;letter-spacing:-0.628px;left:236.64px;">10</div>
<div class="t nv" style="top:1px;line-height:19px;letter-spacing:-0.399px;left:307.80px;">0</div>
<div class="t nv" style="top:1px;line-height:19px;letter-spacing:0.160px;left:358.97px;">+10</div>
<div class="t nv" style="top:1px;line-height:19px;letter-spacing:-0.628px;left:431.64px;">10</div>
</div>
<div class="row g" style="top:82px;width:444px;right:auto">
<svg class="ic" style="left:5px;top:4px" width="9" height="9" ><use href="#i-plus"/></svg>
<div class="t" style="top:1px;line-height:19px;letter-spacing:-0.307px;left:20.4px;">TActiveStyleObject</div>
<div class="t nv" style="top:1px;line-height:19px;letter-spacing:-0.729px;left:236.74px;">66</div>
<div class="t nv" style="top:1px;line-height:19px;letter-spacing:-0.399px;left:307.80px;">0</div>
<div class="t nv" style="top:1px;line-height:19px;letter-spacing:0.256px;left:358.78px;">+66</div>
<div class="t nv" style="top:1px;line-height:19px;letter-spacing:-0.729px;left:431.74px;">66</div>
</div>
<div class="row" style="top:101px;width:444px;right:auto">
<svg class="ic" style="left:5px;top:4px" width="9" height="9" ><use href="#i-plus"/></svg>
<div class="t" style="top:1px;line-height:19px;letter-spacing:-0.392px;left:20.4px;">TActiveStyleTextObject</div>
<div class="t nv" style="top:1px;line-height:19px;letter-spacing:-0.736px;left:236.74px;">20</div>
<div class="t nv" style="top:1px;line-height:19px;letter-spacing:-0.399px;left:307.80px;">0</div>
<div class="t nv" style="top:1px;line-height:19px;letter-spacing:0.255px;left:358.78px;">+20</div>
<div class="t nv" style="top:1px;line-height:19px;letter-spacing:-0.736px;left:431.74px;">20</div>
</div>
<div class="row g" style="top:120px;width:444px;right:auto">
<svg class="ic" style="left:5px;top:4px" width="9" height="9" ><use href="#i-plus"/></svg>
<div class="t" style="top:1px;line-height:19px;letter-spacing:0.010px;left:20.4px;">TApplication</div>
<div class="t nv" style="top:1px;line-height:19px;letter-spacing:-0.399px;left:242.80px;">1</div>
<div class="t nv" style="top:1px;line-height:19px;letter-spacing:-0.399px;left:307.80px;">0</div>
<div class="t nv" style="top:1px;line-height:19px;letter-spacing:0.586px;left:365.10px;">+1</div>
<div class="t nv" style="top:1px;line-height:19px;letter-spacing:-0.399px;left:437.80px;">1</div>
</div>
<div class="row" style="top:139px;width:444px;right:auto">
<svg class="ic" style="left:5px;top:4px" width="9" height="9" ><use href="#i-plus"/></svg>
<div class="t" style="top:1px;line-height:19px;letter-spacing:-0.152px;left:20.4px;">TApplication.TFormRegistryItem</div>
<div class="t nv" style="top:1px;line-height:19px;letter-spacing:-0.399px;left:242.80px;">1</div>
<div class="t nv" style="top:1px;line-height:19px;letter-spacing:-0.399px;left:307.80px;">0</div>
<div class="t nv" style="top:1px;line-height:19px;letter-spacing:0.586px;left:365.10px;">+1</div>
<div class="t nv" style="top:1px;line-height:19px;letter-spacing:-0.399px;left:437.80px;">1</div>
</div>
<div class="row g" style="top:158px;width:444px;right:auto">
<svg class="ic" style="left:5px;top:4px" width="9" height="9" ><use href="#i-plus"/></svg>
<div class="t" style="top:1px;line-height:19px;letter-spacing:-0.086px;left:20.4px;">TApplicationFormFactor</div>
<div class="t nv" style="top:1px;line-height:19px;letter-spacing:-0.399px;left:242.80px;">1</div>
<div class="t nv" style="top:1px;line-height:19px;letter-spacing:-0.399px;left:307.80px;">0</div>
<div class="t nv" style="top:1px;line-height:19px;letter-spacing:0.586px;left:365.10px;">+1</div>
<div class="t nv" style="top:1px;line-height:19px;letter-spacing:-0.399px;left:437.80px;">1</div>
</div>
<div class="row" style="top:177px;width:444px;right:auto">
<svg class="ic" style="left:5px;top:4px" width="9" height="9" ><use href="#i-plus"/></svg>
<div class="t" style="top:1px;line-height:19px;letter-spacing:-0.496px;left:20.4px;">TBaseValueRange</div>
<div class="t nv" style="top:1px;line-height:19px;letter-spacing:-1.000px;left:237.01px;">82</div>
<div class="t nv" style="top:1px;line-height:19px;letter-spacing:-0.399px;left:307.80px;">0</div>
<div class="t nv" style="top:1px;line-height:19px;letter-spacing:0.163px;left:358.97px;">+82</div>
<div class="t nv" style="top:1px;line-height:19px;letter-spacing:-1.000px;left:432.01px;">82</div>
</div>
<div class="row g" style="top:196px;width:444px;right:auto">
<svg class="ic" style="left:5px;top:4px" width="9" height="9" ><use href="#i-plus"/></svg>
<div class="t" style="top:1px;line-height:19px;letter-spacing:-0.420px;left:20.4px;">TBehaviorClass</div>
<div class="t nv" style="top:1px;line-height:19px;letter-spacing:-0.399px;left:242.80px;">1</div>
<div class="t nv" style="top:1px;line-height:19px;letter-spacing:-0.399px;left:307.80px;">0</div>
<div class="t nv" style="top:1px;line-height:19px;letter-spacing:0.586px;left:365.10px;">+1</div>
<div class="t nv" style="top:1px;line-height:19px;letter-spacing:-0.399px;left:437.80px;">1</div>
</div>
<div class="row" style="top:215px;width:444px;right:auto">
<svg class="ic" style="left:5px;top:4px" width="9" height="9" ><use href="#i-plus"/></svg>
<div class="t" style="top:1px;line-height:19px;letter-spacing:-0.421px;left:20.4px;">TBehaviorServices</div>
<div class="t nv" style="top:1px;line-height:19px;letter-spacing:-0.399px;left:242.80px;">1</div>
<div class="t nv" style="top:1px;line-height:19px;letter-spacing:-0.399px;left:307.80px;">0</div>
<div class="t nv" style="top:1px;line-height:19px;letter-spacing:0.586px;left:365.10px;">+1</div>
<div class="t nv" style="top:1px;line-height:19px;letter-spacing:-0.399px;left:437.80px;">1</div>
</div>
<div class="row g" style="top:234px;width:444px;right:auto">
<svg class="ic" style="left:5px;top:4px" width="9" height="9" ><use href="#i-plus"/></svg>
<div class="t" style="top:1px;line-height:19px;letter-spacing:0.023px;left:20.4px;">TBigEndianUnicodeEncoding</div>
<div class="t nv" style="top:1px;line-height:19px;letter-spacing:-0.399px;left:242.80px;">1</div>
<div class="t nv" style="top:1px;line-height:19px;letter-spacing:-0.399px;left:307.80px;">0</div>
<div class="t nv" style="top:1px;line-height:19px;letter-spacing:0.586px;left:365.10px;">+1</div>
<div class="t nv" style="top:1px;line-height:19px;letter-spacing:-0.399px;left:437.80px;">1</div>
</div>
<div class="row" style="top:253px;width:444px;right:auto">
<svg class="ic" style="left:5px;top:4px" width="9" height="9" ><use href="#i-plus"/></svg>
<div class="t" style="top:1px;line-height:19px;letter-spacing:-0.342px;left:20.4px;">TBitmap</div>
<div class="t nv" style="top:1px;line-height:19px;letter-spacing:-0.680px;left:230.97px;">178</div>
<div class="t nv" style="top:1px;line-height:19px;letter-spacing:-0.399px;left:307.80px;">0</div>
<div class="t nv" style="top:1px;line-height:19px;letter-spacing:-0.137px;left:353.31px;">+178</div>
<div class="t nv" style="top:1px;line-height:19px;letter-spacing:-0.680px;left:425.97px;">178</div>
</div>
<div class="row g" style="top:272px;width:444px;right:auto">
<svg class="ic" style="left:5px;top:4px" width="9" height="9" ><use href="#i-plus"/></svg>
<div class="t" style="top:1px;line-height:19px;letter-spacing:-0.278px;left:20.4px;">TBitmapImage</div>
<div class="t nv" style="top:1px;line-height:19px;letter-spacing:-0.548px;left:230.71px;">180</div>
<div class="t nv" style="top:1px;line-height:19px;letter-spacing:-0.399px;left:307.80px;">0</div>
<div class="t nv" style="top:1px;line-height:19px;letter-spacing:-0.049px;left:353.04px;">+180</div>
<div class="t nv" style="top:1px;line-height:19px;letter-spacing:-0.548px;left:425.71px;">180</div>
</div>
<div class="row" style="top:291px;width:444px;right:auto">
<svg class="ic" style="left:5px;top:4px" width="9" height="9" ><use href="#i-plus"/></svg>
<div class="t" style="top:1px;line-height:19px;letter-spacing:-0.242px;left:20.4px;">TBitmapLink</div>
<div class="t nv" style="top:1px;line-height:19px;letter-spacing:-0.552px;left:224.87px;">2799</div>
<div class="t nv" style="top:1px;line-height:19px;letter-spacing:-0.399px;left:307.80px;">0</div>
<div class="t nv" style="top:1px;line-height:19px;letter-spacing:-0.102px;left:346.91px;">+2799</div>
<div class="t nv" style="top:1px;line-height:19px;letter-spacing:-0.552px;left:419.87px;">2799</div>
</div>
<div class="row g" style="top:310px;width:444px;right:auto">
<svg class="ic" style="left:5px;top:4px" width="9" height="9" ><use href="#i-plus"/></svg>
<div class="t" style="top:1px;line-height:19px;letter-spacing:-0.250px;left:20.4px;">TBitmapLinks</div>
<div class="t nv" style="top:1px;line-height:19px;letter-spacing:-0.455px;left:224.58px;">1140</div>
<div class="t nv" style="top:1px;line-height:19px;letter-spacing:-0.399px;left:307.80px;">0</div>
<div class="t nv" style="top:1px;line-height:19px;letter-spacing:-0.104px;left:346.92px;">+1140</div>
<div class="t nv" style="top:1px;line-height:19px;letter-spacing:-0.455px;left:419.58px;">1140</div>
</div>
<div class="row" style="top:329px;width:444px;right:auto">
<svg class="ic" style="left:5px;top:4px" width="9" height="9" ><use href="#i-plus"/></svg>
<div class="t" style="top:1px;line-height:19px;letter-spacing:-0.020px;left:20.4px;">TBitmapListAnimation</div>
<div class="t nv" style="top:1px;line-height:19px;letter-spacing:-0.399px;left:242.80px;">1</div>
<div class="t nv" style="top:1px;line-height:19px;letter-spacing:-0.399px;left:307.80px;">0</div>
<div class="t nv" style="top:1px;line-height:19px;letter-spacing:0.586px;left:365.10px;">+1</div>
<div class="t nv" style="top:1px;line-height:19px;letter-spacing:-0.399px;left:437.80px;">1</div>
</div>
<div class="row g" style="top:348px;width:444px;right:auto">
<svg class="ic" style="left:5px;top:4px" width="9" height="9" ><use href="#i-plus"/></svg>
<div class="t" style="top:1px;line-height:19px;letter-spacing:-0.112px;left:20.4px;">TBitmapListAnimation.TAnimat...</div>
<div class="t nv" style="top:1px;line-height:19px;letter-spacing:-0.399px;left:242.80px;">1</div>
<div class="t nv" style="top:1px;line-height:19px;letter-spacing:-0.399px;left:307.80px;">0</div>
<div class="t nv" style="top:1px;line-height:19px;letter-spacing:0.586px;left:365.10px;">+1</div>
<div class="t nv" style="top:1px;line-height:19px;letter-spacing:-0.399px;left:437.80px;">1</div>
</div>
<div class="row" style="top:367px;width:444px;right:auto">
<svg class="ic" style="left:5px;top:4px" width="9" height="9" ><use href="#i-plus"/></svg>
<div class="t" style="top:1px;line-height:19px;letter-spacing:-0.061px;left:20.4px;">TBitmapMargins</div>
<div class="t nv" style="top:1px;line-height:19px;letter-spacing:-0.510px;left:236.52px;">13</div>
<div class="t nv" style="top:1px;line-height:19px;letter-spacing:-0.399px;left:307.80px;">0</div>
<div class="t nv" style="top:1px;line-height:19px;letter-spacing:0.219px;left:358.85px;">+13</div>
<div class="t nv" style="top:1px;line-height:19px;letter-spacing:-0.510px;left:431.52px;">13</div>
</div>
<div class="row g" style="top:386px;width:444px;right:auto">
<svg class="ic" style="left:5px;top:4px" width="9" height="9" ><use href="#i-plus"/></svg>
<div class="t" style="top:1px;line-height:19px;letter-spacing:-0.108px;left:20.4px;">TBitmapOfItem</div>
<div class="t nv" style="top:1px;line-height:19px;letter-spacing:-0.399px;left:242.80px;">2</div>
<div class="t nv" style="top:1px;line-height:19px;letter-spacing:-0.399px;left:307.80px;">0</div>
<div class="t nv" style="top:1px;line-height:19px;letter-spacing:0.793px;left:364.90px;">+2</div>
<div class="t nv" style="top:1px;line-height:19px;letter-spacing:-0.399px;left:437.80px;">2</div>
</div>
<div class="row" style="top:405px;width:444px;right:auto">
<svg class="ic" style="left:5px;top:4px" width="9" height="9" ><use href="#i-plus"/></svg>
<div class="t" style="top:1px;line-height:19px;letter-spacing:-0.079px;left:20.4px;">TBitmapSwitchObject</div>
<div class="t nv" style="top:1px;line-height:19px;letter-spacing:-0.399px;left:242.80px;">1</div>
<div class="t nv" style="top:1px;line-height:19px;letter-spacing:-0.399px;left:307.80px;">0</div>
<div class="t nv" style="top:1px;line-height:19px;letter-spacing:0.586px;left:365.10px;">+1</div>
<div class="t nv" style="top:1px;line-height:19px;letter-spacing:-0.399px;left:437.80px;">1</div>
</div>
<div class="row g" style="top:424px;width:444px;right:auto">
<svg class="ic" style="left:5px;top:4px" width="9" height="9" ><use href="#i-plus"/></svg>
<div class="t" style="top:1px;line-height:19px;letter-spacing:-0.279px;left:20.4px;">TBounds</div>
<div class="t nv" style="top:1px;line-height:19px;letter-spacing:-0.491px;left:218.79px;">10218</div>
<div class="t nv" style="top:1px;line-height:19px;letter-spacing:-0.399px;left:307.80px;">0</div>
<div class="t nv" style="top:1px;line-height:19px;letter-spacing:-0.203px;left:341.12px;">+10218</div>
<div class="t nv" style="top:1px;line-height:19px;letter-spacing:-0.491px;left:413.79px;">10218</div>
</div>
<div class="a" style="left:0;top:436px;width:463px;height:1px;background:#fff"></div>
<div class="a" style="left:446px;top:1px;width:16px;height:435px;background:#f0f0f0"></div>
<div class="a" style="left:446px;top:18px;width:15px;height:26px;background:#cdcdcd"></div>
<svg class="ic" style="left:449px;top:6px" width="9" height="8" viewBox="0 0 9 8"><path d="M1.4 6.2L4.4 2.3L7.4 6.2" stroke="#555" stroke-width="2.1" fill="none"/></svg>
<svg class="ic" style="left:449px;top:424px" width="9" height="8" viewBox="0 0 9 8"><path d="M1.4 1.6L4.4 5.5L7.4 1.6" stroke="#555" stroke-width="2.1" fill="none"/></svg>
</div>
</body></html>
